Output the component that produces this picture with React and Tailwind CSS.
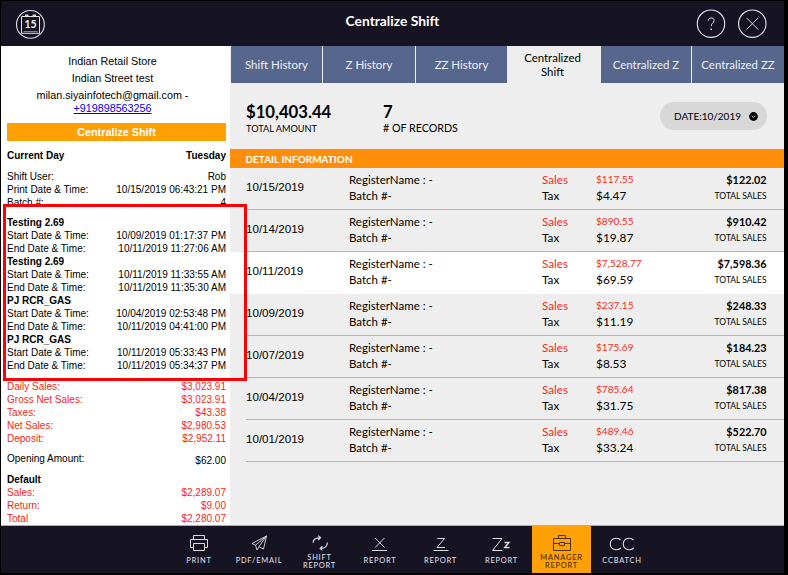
const LATO = "font-[Lato,'Open_Sans',sans-serif]";

const registers = [
  ["Testing 2.69", "10/09/2019 01:17:37 PM", "10/11/2019 11:27:06 AM"],
  ["Testing 2.69", "10/11/2019 11:33:55 AM", "10/11/2019 11:35:30 AM"],
  ["PJ RCR_GAS", "10/04/2019 02:53:48 PM", "10/11/2019 04:41:00 PM"],
  ["PJ RCR_GAS", "10/11/2019 05:33:43 PM", "10/11/2019 05:34:37 PM"],
];

const records = [
  { date: "10/15/2019", sales: "$117.55", tax: "$4.47", total: "$122.02" },
  { date: "10/14/2019", sales: "$890.55", tax: "$19.87", total: "$910.42" },
  { date: "10/11/2019", sales: "$7,528.77", tax: "$69.59", total: "$7,598.36", selected: true },
  { date: "10/09/2019", sales: "$237.15", tax: "$11.19", total: "$248.33" },
  { date: "10/07/2019", sales: "$175.69", tax: "$8.53", total: "$184.23" },
  { date: "10/04/2019", sales: "$785.64", tax: "$31.75", total: "$817.38" },
  { date: "10/01/2019", sales: "$489.46", tax: "$33.24", total: "$522.70" },
];

function Line({ label, value, className = "" }) {
  return (
    <div className={`flex h-[13px] justify-between ${className}`}>
      <span>{label}</span>
      <span>{value}</span>
    </div>
  );
}

function Header() {
  return (
    <header className="flex h-[45px] shrink-0 items-start bg-[#161322] text-white">
      <svg className="mt-[8px] ml-[14px] h-[30px] w-[30px]" viewBox="0 0 30 30" fill="none" stroke="#e4e3e8">
        <circle cx="15.4" cy="15.4" r="13.9" strokeWidth="1.1" />
        <path d="M6.5 7.5H24.5V24.3H6.5Z" strokeWidth="1" />
        <path d="M8.5 22.6H22.5" strokeWidth="0.6" />
        <path d="M10 6.6h3.4M17.6 6.6h3.4" strokeWidth="2" />
        <text x="15.6" y="18.9" textAnchor="middle" fontFamily="Lato" fontWeight="700" fontSize="10.5" fill="#f0f0f2" stroke="none">15</text>
      </svg>
      <h1 className={`mt-[11px] ml-[300.6px] text-[13.8px] leading-[17px] font-bold whitespace-nowrap ${LATO}`}>Centralize Shift</h1>
      <div className="mt-[8px] mr-[17px] ml-auto flex gap-[11px]">
        <svg className="h-[30px] w-[30px]" viewBox="0 0 30 30" fill="none" stroke="#e4e3e8">
          <circle cx="15" cy="14.7" r="13.7" strokeWidth="1.1" />
          <path d="M12.2 11.7C12.2 8.1 18.1 8 18.1 11.6C18.1 14 15.2 14.1 15.2 17.2" strokeWidth="1" />
          <path d="M14.5 20.3h1.5" strokeWidth="1.4" />
        </svg>
        <svg className="h-[30px] w-[30px]" viewBox="0 0 30 30" fill="none" stroke="#e4e3e8">
          <circle cx="15.3" cy="14.7" r="13.7" strokeWidth="1.1" />
          <path d="M9.5 8.9L21.2 20.6M21.2 8.9L9.5 20.6" strokeWidth="0.9" />
        </svg>
      </div>
    </header>
  );
}

function Receipt() {
  return (
    <aside className="h-full w-[229px] shrink-0 overflow-hidden bg-white pr-[4px] pl-[6px] font-['Liberation_Sans',sans-serif] text-[10.03px] leading-[13px] text-black">
      <div className="pt-[7px] pr-[8px] text-center text-[10.75px] leading-[17px]">
        <div>Indian Retail Store</div>
        <div>Indian Street test</div>
        <div>milan.siyainfotech@gmail.com -</div>
        <div className="-mt-[2px] h-[14px] leading-[13px] text-[#0000ee] underline">+919898563256</div>
      </div>
      <div className="mt-[7px] h-[18px] bg-[#ffa005] text-center text-[10.8px] leading-[18px] font-bold text-white">Centralize Shift</div>
      <Line label="Current Day" value="Tuesday" className="mt-[8px] font-bold" />
      <Line label="Shift User:" value="Rob" className="mt-[8px]" />
      <Line label="Print Date & Time:" value="10/15/2019 06:43:21 PM" />
      <Line label="Batch #:" value="4" />
      <div className="mt-[7px]">
        {registers.map(([name, start, end]) => (
          <div key={start}>
            <div className="font-bold">{name}</div>
            <Line label="Start Date & Time:" value={start} />
            <Line label="End Date & Time:" value={end} />
          </div>
        ))}
      </div>
      <div className="mt-[8px] text-[#fa2613]">
        <Line label="Daily Sales:" value="$3,023.91" />
        <Line label="Gross Net Sales:" value="$3,023.91" />
        <Line label="Taxes:" value="$43.38" />
        <Line label="Net Sales:" value="$2,980.53" />
        <Line label="Deposit:" value="$2,952.11" />
      </div>
      <div className="mt-[7px] flex h-[13px] justify-between">
        <span>Opening Amount:</span>
        <span className="mt-[2px]">$62.00</span>
      </div>
      <div className="mt-[8px] font-bold">Default</div>
      <div className="text-[#fa2613]">
        <Line label="Sales:" value="$2,289.07" />
        <Line label="Return:" value="$9.00" />
        <Line label="Total" value="$2,280.07" />
      </div>
    </aside>
  );
}

function Tabs() {
  const tab = "flex h-full items-center justify-center bg-[#56668d]";
  return (
    <nav className="grid h-[37px] grid-cols-[91px_92px_91px_92px_90px_92px] gap-x-px bg-[#eeeeee] pl-px text-[11.45px] text-[#eef0f6]">
      <div className={tab}>Shift History</div>
      <div className={tab}>Z History</div>
      <div className={tab}>ZZ History</div>
      <div className="flex h-full items-center justify-center pr-[3px] text-center leading-[14px] text-black">Centralized<br />Shift</div>
      <div className={tab}>Centralized Z</div>
      <div className={tab}>Centralized ZZ</div>
    </nav>
  );
}

function Report() {
  return (
    <main className={`h-full w-[554px] shrink-0 bg-[#eeeeee] text-black ${LATO}`}>
      <Tabs />
      <section className="flex h-[66px] pl-[16px]">
        <div className="w-[137px] pt-[19px]">
          <div className="text-[16.7px] leading-[20px] font-bold">$10,403.44</div>
          <div className="pt-px text-[9.2px] leading-[12px]">TOTAL AMOUNT</div>
        </div>
        <div className="pt-[19px]">
          <div className="text-[16.7px] leading-[20px] font-bold">7</div>
          <div className="text-[10.7px] leading-[12px]"># OF RECORDS</div>
        </div>
        <button className="mt-[19px] mr-[17.5px] ml-auto flex h-[28px] w-[107px] items-center rounded-full bg-[#d7d7d7] pl-[14.5px] text-[10px]">
          <span>DATE:10/2019</span>
          <svg className="mr-[8.5px] ml-auto h-[9px] w-[9px]" viewBox="0 0 9 9" fill="none">
            <circle cx="4.5" cy="4.5" r="4.4" fill="black" />
            <path d="M2.6 3.8L4.5 5.6L6.4 3.8" stroke="#d7d7d7" strokeWidth="1" />
          </svg>
        </button>
      </section>
      <div className="h-[19px] bg-[#ff8f0b] pl-[15.5px] text-[10px] leading-[20px] font-bold text-white">DETAIL INFORMATION</div>
      {records.map((r) => (
        <div key={r.date} className={`h-[42px] pl-[16px] ${r.selected ? "bg-white" : ""}`}>
          <div className={`grid h-full grid-cols-[103px_193px_54px_1fr_auto] border-b pr-[17.5px] text-[11.7px] leading-[16px] ${r.selected ? "border-white" : "border-[#b4b4b4]"}`}>
            <div className="pt-[11px] font-['Liberation_Sans',sans-serif] text-[11.6px]">{r.date}</div>
            <div className="pt-[4px] text-[11.5px]">
              <div>RegisterName : -</div>
              <div>Batch #-</div>
            </div>
            <div className="pt-[3px]">
              <div className="text-[#f42c27]">Sales</div>
              <div>Tax</div>
            </div>
            <div className="pt-[3px]">
              <div className="text-[10.1px] leading-[16px] text-[#f42c27]">{r.sales}</div>
              <div className="pt-px text-[11.9px]">{r.tax}</div>
            </div>
            <div className="pt-[4px] text-right">
              <div className="text-[10.8px] leading-[16px] font-bold">{r.total}</div>
              <div className="text-[8.5px] leading-[16px]">TOTAL SALES</div>
            </div>
          </div>
        </div>
      ))}
    </main>
  );
}

function NavItem({ label, second, active, children }) {
  return (
    <div className={`flex h-full flex-col items-center text-center ${active ? "bg-[#ffa005] text-[#4a3209]" : "text-[#dcdbe0]"}`}>
      <svg className="mt-[6px] h-[22px] w-[30px] shrink-0" viewBox="0 0 30 22" fill="none" stroke="currentColor" strokeWidth="1">
        {children}
      </svg>
      <div className={`text-[7.5px] leading-[8px] font-medium tracking-[0.75px] whitespace-nowrap ${second ? "mt-0" : "mt-[3px]"}`}>
        {label}
        {second && <><br />{second}</>}
      </div>
    </div>
  );
}

function Footer() {
  return (
    <footer className={`grid h-[47px] shrink-0 grid-cols-[60px_60px_61px_60px_61px_61px_59px_62px] bg-[#161322] pl-[168px] ${LATO}`}>
      <NavItem label="PRINT">
        <path d="M9.5 7.5V3.5H20.5V7.5M9 15.5H6.5V7.5H23.5V15.5H21M9.5 11.5H20.5V18.5H9.5Z" />
      </NavItem>
      <NavItem label="PDF/EMAIL">
        <path d="M22.5 4L8 11.5L11.5 13.2L13 18L15 14.8L19.5 17Z M22.5 4L11.5 13.2M22.5 4L14.8 14.8" strokeWidth="0.9" />
      </NavItem>
      <NavItem label="SHIFT" second="REPORT">
        <path d="M8 10.8C8 7.6 10.6 5.6 15.2 5.8M13.2 3.6L15.5 5.8L13.2 8M22.4 10.4C22.4 14 20 16.6 15.4 16.4M17.4 14.2L15.2 16.4L17.4 18.4" strokeWidth="1.2" />
      </NavItem>
      <NavItem label="REPORT">
        <path d="M10.2 6L19.5 15.5M19.5 6L10.2 15.5M7 18.5H22" />
      </NavItem>
      <NavItem label="REPORT">
        <path d="M11.3 6.5H18.5L11 15.5H19M7.5 18.5H22.5" />
      </NavItem>
      <NavItem label="REPORT">
        <path d="M5.5 6.5H15L5.5 18.5H15.5" />
        <path d="M17.5 10.5H22L17.7 15.5H22.5" strokeWidth="1.4" />
      </NavItem>
      <NavItem label="MANAGER" second="REPORT" active>
        <path d="M6.5 6.5H23.5V18.5H6.5ZM11.5 6.5V3.5H18.5V6.5M6.5 11.5H12.5M17.5 11.5H23.5M12.5 10.5H17.5V13.5H12.5Z" />
      </NavItem>
      <NavItem label="CCBATCH">
        <path d="M13.5 8C10.5 4.8 3.3 6 3.3 12C3.3 18 10.5 19.2 13.7 16M26.5 8C23.5 4.8 16.3 6 16.3 12C16.3 18 23.5 19.2 26.7 16" strokeWidth="1.1" />
      </NavItem>
    </footer>
  );
}

export default function App() {
  return (
    <div className="relative flex h-[575px] w-[788px] flex-col overflow-hidden bg-black pt-px pr-[4px] pb-[2px] pl-px">
      <Header />
      <div className="flex h-[480px] shrink-0 border-b border-[#a6b0ae]">
        <Receipt />
        <Report />
      </div>
      <Footer />
      {/* Highlight over the register time lines */}
      <div className="absolute top-[204px] left-[3px] h-[177px] w-[244px] border-[3px] border-[#fb0007]" />
    </div>
  );
}
